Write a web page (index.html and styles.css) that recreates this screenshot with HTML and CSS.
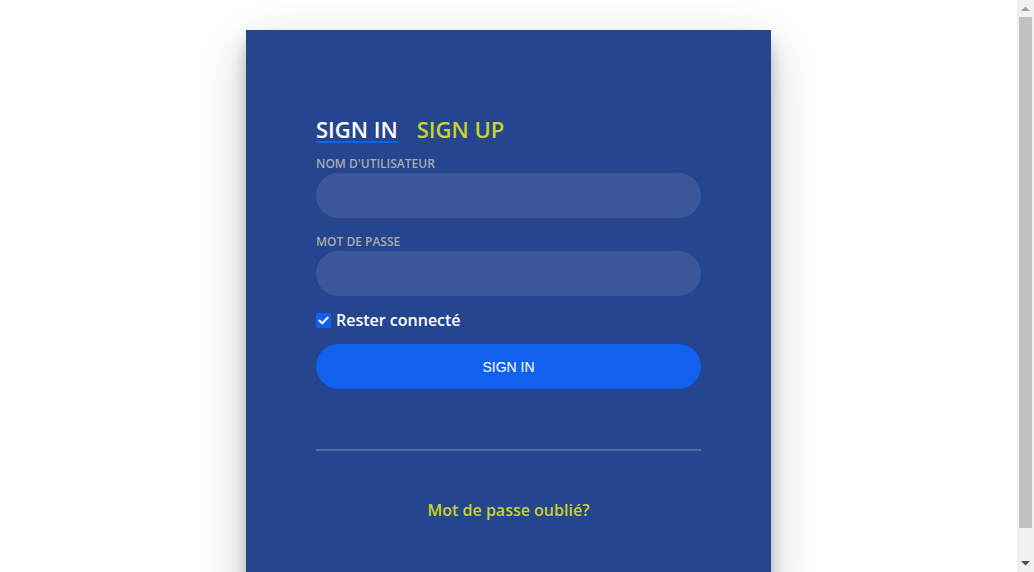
FILE: index.html
```html
<!DOCTYPE html>
<html lang="fr">
<head>
<meta charset="utf-8">
<title>Login</title>
<link rel="stylesheet" href="styles.css">
</head>
<body>
<div class="screen">
  <div class="main">
    <div class="card">
      <div class="tabs">
        <span class="tab tab-active">SIGN IN</span>
        <span class="tab tab-other">SIGN UP</span>
      </div>
      <form class="form">
        <div class="group">
          <label class="label">NOM D'UTILISATEUR</label>
          <div class="input"></div>
        </div>
        <div class="group">
          <label class="label">MOT DE PASSE</label>
          <div class="input"></div>
        </div>
        <div class="check-row">
          <span class="checkbox">
            <svg width="11" height="9" viewBox="0 0 11 9"><path d="M1.3 4.6 L4.2 7.3 L9.7 1.6" fill="none" stroke="#fff" stroke-width="2" stroke-linecap="round" stroke-linejoin="round"/></svg>
          </span>
          <span class="check-label">Rester connecté</span>
        </div>
        <div class="button">SIGN IN</div>
        <div class="hr"></div>
        <div class="foot">Mot de passe oublié?</div>
      </form>
    </div>
  </div>
  <div class="scrollbar">
    <div class="sb-btn">
      <svg width="9" height="5" viewBox="0 0 9 5"><path d="M0 5 L4.5 0.5 L9 5 Z" fill="#a3a3a3"/></svg>
    </div>
    <div class="sb-track">
      <div class="sb-thumb"></div>
    </div>
    <div class="sb-btn">
      <svg width="9" height="5" viewBox="0 0 9 5"><path d="M0 0 L9 0 L4.5 4.5 Z" fill="#505050"/></svg>
    </div>
  </div>
</div>
</body>
</html>
```
FILE: styles.css
```css
html, body {
  margin: 0;
  padding: 0;
  background: #fff;
  overflow: hidden;
}
body {
  font-family: "Open Sans", "Liberation Sans", sans-serif;
}
.screen {
  display: flex;
  height: 100vh;
}
.main {
  flex: 1;
  overflow: hidden;
  padding-top: 30px;
}
.scrollbar {
  width: 17px;
  flex: none;
  background: #f1f1f1;
  display: flex;
  flex-direction: column;
}
.sb-btn {
  height: 17px;
  display: flex;
  align-items: center;
  justify-content: center;
}
.sb-track {
  flex: 1;
  display: flex;
  flex-direction: column;
}
.sb-thumb {
  margin: 0 2px;
  height: 511px;
  background: #c1c1c1;
}
.card {
  width: 525px;
  height: 570px;
  margin: 0 auto;
  box-sizing: border-box;
  padding: 87px 70px 0 70px;
  background: #25458f;
  box-shadow: 0 12px 15px 0 rgba(0,0,0,.24), 0 17px 50px 0 rgba(0,0,0,.19);
}
.tabs {
  display: flex;
  gap: 19px;
  margin-bottom: 14px;
}
.tab {
  font-size: 22px;
  font-weight: 600;
  line-height: 24px;
  border-bottom: 2px solid transparent;
}
.tab-active {
  color: #fff;
  border-bottom-color: #1161ee;
}
.tab-other {
  color: #c9d22c;
}
.form {
  display: flex;
  flex-direction: column;
}
.group {
  display: flex;
  flex-direction: column;
  gap: 2px;
  margin-bottom: 17px;
}
.group + .group {
  margin-bottom: 15px;
}
.label {
  font-size: 12px;
  font-weight: 600;
  line-height: 14px;
  color: #aaa;
}
.input {
  height: 45px;
  border-radius: 25px;
  background: rgba(255,255,255,.1);
}
.check-row {
  display: flex;
  align-items: center;
  gap: 5px;
  height: 18px;
}
.checkbox {
  width: 15px;
  height: 15px;
  border-radius: 2px;
  background: #1161ee;
  display: flex;
  align-items: center;
  justify-content: center;
}
.check-label {
  font-size: 16px;
  font-weight: 600;
  color: #fff;
  line-height: 18px;
}
.button {
  margin-top: 15px;
  height: 45px;
  border-radius: 25px;
  background: #1161ee;
  color: #fff;
  font-family: "Liberation Sans", Arial, sans-serif;
  font-size: 14px;
  display: flex;
  align-items: center;
  justify-content: center;
}
.hr {
  height: 2px;
  margin-top: 60px;
  background: rgba(255,255,255,.2);
}
.foot {
  margin-top: 48px;
  text-align: center;
  font-size: 16px;
  font-weight: 600;
  line-height: 22px;
  color: #c9d22c;
}
```
